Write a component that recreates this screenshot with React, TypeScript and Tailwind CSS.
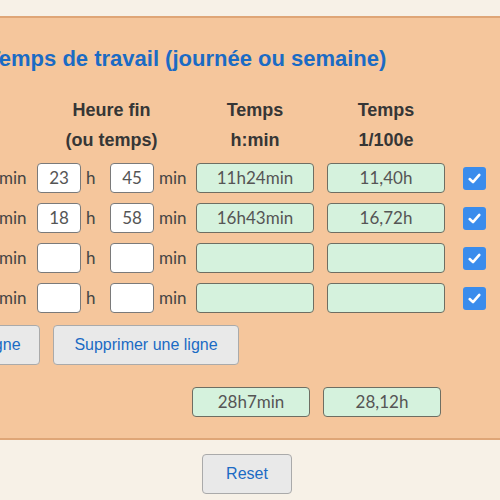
import React from 'react';

const rows = [
  { h: '23', m: '45', hm: '11h24min', dec: '11,40h' },
  { h: '18', m: '58', hm: '16h43min', dec: '16,72h' },
  { h: '', m: '', hm: '', dec: '' },
  { h: '', m: '', hm: '', dec: '' },
];

const valueFont = { fontFamily: 'Lato, "Noto Sans", sans-serif' };

const Check = () => (
  <span className="flex h-[23px] w-[23px] items-center justify-center rounded-[3px] bg-[#3a8cec]">
    <svg width="15" height="15" viewBox="0 0 14 14" fill="none">
      <path d="M2.5 7.5 L5.6 10.4 L11.5 3.6" stroke="white" strokeWidth="2.4" strokeLinecap="round" strokeLinejoin="round" />
    </svg>
  </span>
);

const NumBox = ({ value }: { value: string }) => (
  <div className="flex h-[30px] w-[44px] items-center justify-center rounded-[4px] border border-[#7a7a7a] bg-white text-[17px] text-[#555]">
    {value}
  </div>
);

const ResultBox = ({ value }: { value: string }) => (
  <div className="flex h-[30px] w-[118px] items-center justify-center rounded-[4px] border border-[#6e6e62] bg-[#d5f2dd] text-[17px] text-[#555]">
    {value}
  </div>
);

export default function App() {
  return (
    <div className="h-[500px] w-[500px] overflow-hidden bg-[#f7f1e7] pt-[16px]" style={{ fontFamily: '"Liberation Sans", Arial, sans-serif' }}>
      <div className="h-[424px] border-y-2 border-[#dfa677] bg-[#f5c69c]">
        <h2 className="-ml-[13px] mt-[28px] whitespace-nowrap text-[22px] font-bold leading-[26px] text-[#1b6bc4]">
          Temps de travail (journée ou semaine)
        </h2>

        <div className="mt-[23px] flex text-[18px] font-bold leading-[30px] text-[#363636]">
          <div className="ml-[37px] w-[149px] text-center">Heure fin<br />(ou temps)</div>
          <div className="ml-[10px] w-[118px] text-center">Temps<br />h:min</div>
          <div className="ml-[13px] w-[118px] text-center">Temps<br />1/100e</div>
        </div>

        <div className="mt-[8px] flex flex-col gap-[10px]" style={valueFont}>
          {rows.map((r, i) => (
            <div key={i} className="flex items-center text-[17px] text-[#444]">
              <span className="-ml-[1px] w-[28px]">min</span>
              <div className="ml-[10px]"><NumBox value={r.h} /></div>
              <span className="ml-[5px] w-[15px]">h</span>
              <div className="ml-[9px]"><NumBox value={r.m} /></div>
              <span className="ml-[5px] w-[27px]">min</span>
              <div className="ml-[10px]"><ResultBox value={r.hm} /></div>
              <div className="ml-[13px]"><ResultBox value={r.dec} /></div>
              <div className="ml-[18px]"><Check /></div>
            </div>
          ))}
        </div>

        <div className="-ml-[119px] mt-[12px] flex gap-[13px] text-[16px] text-[#1b6bc4]">
          <button className="h-[40px] w-[159px] whitespace-nowrap rounded-[4px] border border-[#aaa] bg-[#e9e9e9]">Ajouter une ligne</button>
          <button className="h-[40px] w-[186px] whitespace-nowrap rounded-[4px] border border-[#aaa] bg-[#e9e9e9]">Supprimer une ligne</button>
        </div>

        <div className="ml-[192px] mt-[22px] flex gap-[13px]" style={valueFont}>
          <ResultBox value="28h7min" />
          <ResultBox value="28,12h" />
        </div>
      </div>

      <div className="mt-[14px] flex justify-center">
        <button className="ml-[-6px] h-[40px] w-[90px] rounded-[4px] border border-[#aaa] bg-[#e9e9e9] text-[16px] text-[#1b6bc4]">
          Reset
        </button>
      </div>
    </div>
  );
}
